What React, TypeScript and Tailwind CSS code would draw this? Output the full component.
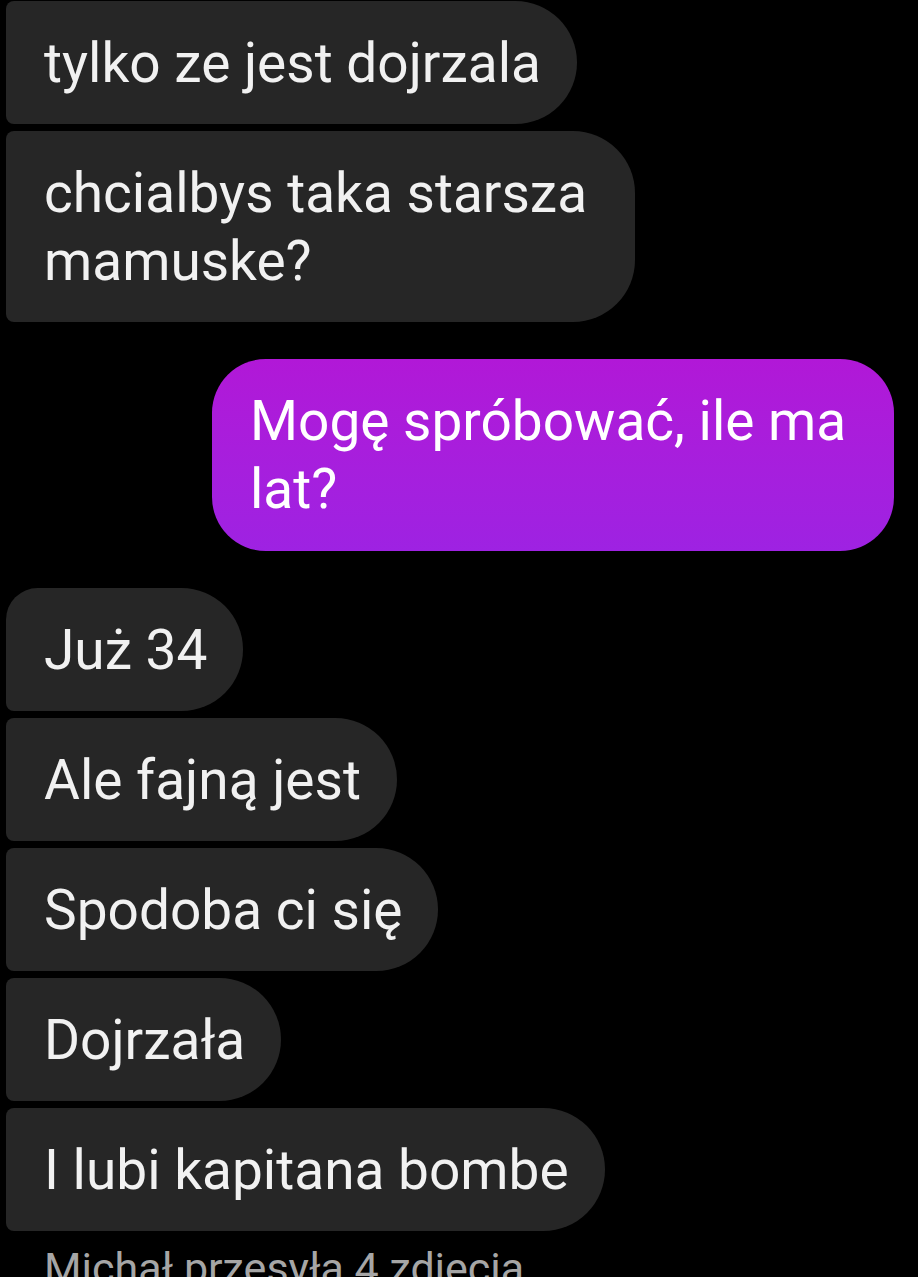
import type { ReactNode } from 'react'

type Incoming = {
  lines: string[]
  first?: boolean
  wide?: boolean
}

const incomingTop: Incoming[] = [
  { lines: ['tylko ze jest dojrzala'] },
  { lines: ['chcialbys taka starsza', 'mamuske?'], wide: true },
]

const incomingBottom: Incoming[] = [
  { lines: ['Już 34'], first: true },
  { lines: ['Ale fajną jest'] },
  { lines: ['Spodoba ci się'] },
  { lines: ['Dojrzała'] },
  { lines: ['I lubi kapitana bombe'] },
]

function withBreaks(lines: string[]): ReactNode {
  return lines.map((line, i) => (
    <span key={i}>
      {line}
      {i < lines.length - 1 && <br />}
    </span>
  ))
}

function GreyBubble({ lines, first, wide }: Incoming) {
  return (
    <div
      className={`w-fit whitespace-nowrap bg-[#262626] text-[#f1f1f1] text-[55px] leading-[68px] pl-[38px] pt-[28px] pb-[27px] rounded-r-[62px] rounded-bl-[8px] ${
        first ? 'rounded-tl-[32px]' : 'rounded-tl-[8px]'
      } ${wide ? 'pr-[48px]' : 'pr-[36px]'}`}
    >
      {withBreaks(lines)}
    </div>
  )
}

export default function App() {
  return (
    <div
      className="h-[1277px] w-[918px] overflow-hidden bg-black pt-px"
      style={{ fontFamily: 'Roboto, "Noto Sans", sans-serif' }}
    >
      <div className="flex flex-col gap-[7px] pl-[6px]">
        {incomingTop.map((m, i) => (
          <GreyBubble key={i} {...m} />
        ))}
      </div>

      <div className="flex justify-end pr-[24px] mt-[37px]">
        <div className="w-[682px] rounded-[54px] bg-gradient-to-b from-[#b118d7] to-[#9e22e2] text-white text-[55px] leading-[68px] px-[38px] pt-[28px] pb-[28px] whitespace-nowrap">
          {withBreaks(['Mogę spróbować, ile ma', 'lat?'])}
        </div>
      </div>

      <div className="flex flex-col gap-[7px] pl-[6px] mt-[37px]">
        {incomingBottom.map((m, i) => (
          <GreyBubble key={i} {...m} />
        ))}
      </div>

      <p className="mt-[11px] pl-[44px] text-[43px] leading-[52px] text-[#a6a6a6] whitespace-nowrap">
        Michał przesyła 4 zdjęcia
      </p>
    </div>
  )
}
